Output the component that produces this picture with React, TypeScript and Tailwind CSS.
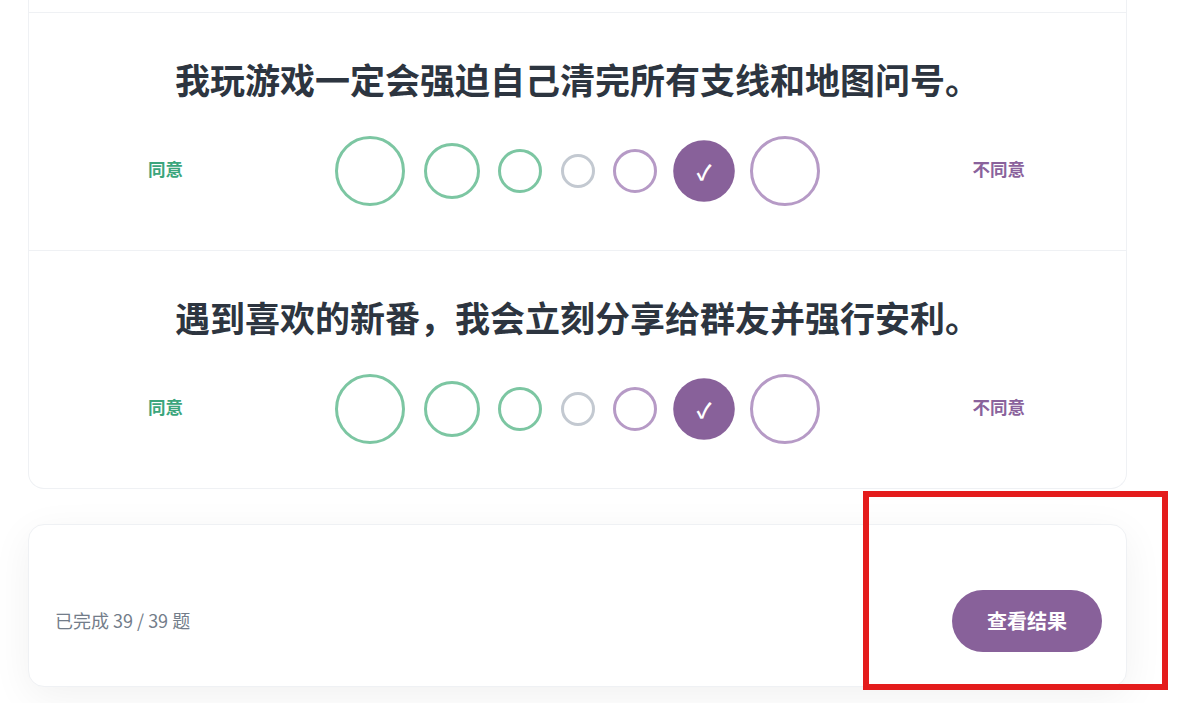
import { useState } from 'react';

const FONT = '"Noto Sans CJK SC", "Noto Sans", sans-serif';

const QUESTIONS = [
  '我玩游戏一定会强迫自己清完所有支线和地图问号。',
  '遇到喜欢的新番，我会立刻分享给群友并强行安利。',
];

// size of each option bubble, left (agree) to right (disagree)
const OPTIONS = [
  { size: 'w-[70px] h-[70px]', ring: 'border-[#7cc6a2]' },
  { size: 'w-[56px] h-[56px]', ring: 'border-[#7cc6a2]' },
  { size: 'w-[44px] h-[44px]', ring: 'border-[#7cc6a2]' },
  { size: 'w-[34px] h-[34px]', ring: 'border-[#c3c9d1]' },
  { size: 'w-[44px] h-[44px]', ring: 'border-[#b69ac6]' },
  { size: 'w-[56px] h-[56px]', ring: 'border-[#b69ac6]' },
  { size: 'w-[70px] h-[70px]', ring: 'border-[#b69ac6]' },
];

const Question = ({ text, picked, onPick }: { text: string; picked: number; onPick: (i: number) => void }) => (
  <div className="border-t border-[#eff1f4] pt-[42px] pb-[44px]">
    <h2 className="text-center text-[35px] leading-[48px] font-bold text-[#2d3540]">{text}</h2>
    <div className="mt-[33px] flex h-[70px] items-center justify-between pl-[119px] pr-[101px]">
      <span className="mb-[4px] text-[17.5px] font-bold text-[#3ba57c]">同意</span>
      <div className="flex items-center gap-[18.5px]">
        {OPTIONS.map((o, i) =>
          i === picked ? (
            <button
              key={i}
              onClick={() => onPick(i)}
              className={`${o.size} scale-110 rounded-full bg-[#88619a] flex items-center justify-center text-white text-[19px] font-bold`}
            >
              ✓
            </button>
          ) : (
            <button
              key={i}
              onClick={() => onPick(i)}
              className={`${o.size} rounded-full border-[3px] ${o.ring} bg-white`}
            />
          ),
        )}
      </div>
      <span className="mb-[4px] text-[17.5px] font-bold text-[#8a629c]">不同意</span>
    </div>
  </div>
);

export default function App() {
  const [answers, setAnswers] = useState([5, 5]);

  return (
    <div className="min-h-screen bg-white pb-[16px]" style={{ fontFamily: FONT }}>
      <div className="w-[1099px] ml-[28px]">
        {/* question card — scrolled so only the tail of the previous row shows */}
        <div className="rounded-b-2xl border-x border-b border-[#eff1f4] bg-white">
          <div className="h-[12px]" />
          {QUESTIONS.map((q, i) => (
            <Question
              key={q}
              text={q}
              picked={answers[i]}
              onPick={(v) => setAnswers((a) => a.map((x, j) => (j === i ? v : x)))}
            />
          ))}
        </div>

        {/* footer card */}
        <div className="relative mt-[35px] rounded-2xl border border-[#eff1f4] bg-white pt-[65px] pb-[34px] pl-[26px] pr-[24px] shadow-[0_10px_40px_rgba(0,0,0,0.06)]">
          <div className="flex items-center justify-between">
            <span className="mb-[2px] text-[18px] text-[#737d8a]">已完成 39 / 39 题</span>
            <button className="h-[62px] w-[150px] rounded-full bg-[#88619a] text-[20px] font-bold text-white">
              查看结果
            </button>
          </div>
          {/* red highlight box from the annotated screenshot */}
          <div className="pointer-events-none absolute left-[834px] top-[-34px] h-[199px] w-[305px] border-[6px] border-[#e41c1c]" />
        </div>
      </div>
    </div>
  );
}
